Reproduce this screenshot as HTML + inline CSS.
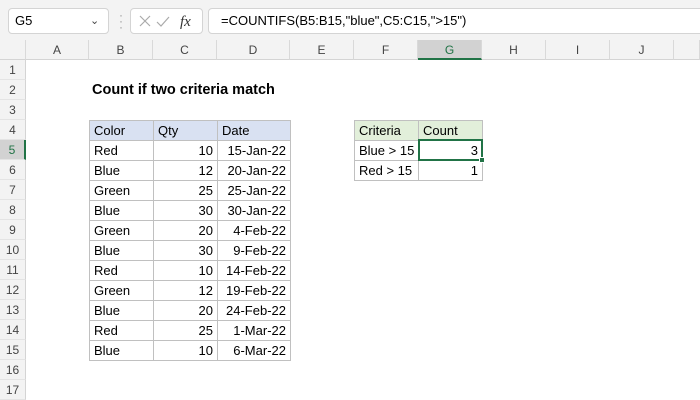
<!DOCTYPE html>
<html><head><meta charset="utf-8"><style>
body{margin:0;width:700px;height:400px;overflow:hidden;background:#fff;font-family:"Liberation Sans",Arial,sans-serif;position:relative}
div{position:absolute;box-sizing:border-box}
.top{left:0;top:0;width:700px;height:40px;background:#f3f3f3}
.box{background:#fff;border:1px solid #d4d4d4;border-radius:4px}
.ch{top:40px;height:20px;background:#f3f3f3;border-right:1px solid #d9d9d9;border-bottom:1px solid #d4d4d4;font-size:12px;color:#444;text-align:center;line-height:20px}
.rh{left:0;width:26px;height:20px;background:#f3f3f3;border-bottom:1px solid #e4e4e4;border-right:1px solid #d4d4d4;font-size:12px;color:#444;text-align:center;line-height:20px}
.c{height:21px;border:1px solid #c0c0c0;font-size:13px;line-height:19px;padding:0 4px;color:#000;white-space:nowrap}
.r{text-align:right}
</style></head><body>
<div class="top"></div>
<div class="box" style="left:8px;top:8px;width:101px;height:26px;font-size:13px;line-height:24px;padding-left:6px">G5</div>
<div style="left:90px;top:14px;font-size:11px;color:#444">&#8964;</div>
<div style="left:119px;top:12px;font-size:12px;color:#999;line-height:6px">·<br>·<br>·</div>
<div class="box" style="left:130px;top:8px;width:73px;height:26px"></div>
<svg style="position:absolute;left:137px;top:13px" width="60" height="16"><path d="M3 3l10 10M13 3L3 13" stroke="#aaa" stroke-width="1.2" fill="none"/><path d="M20 9l4 4 8-9" stroke="#aaa" stroke-width="1.2" fill="none"/><text x="43" y="13" font-family="Liberation Serif" font-style="italic" font-size="15" fill="#333">fx</text></svg>
<div class="box" style="left:208px;top:8px;width:500px;height:26px;font-size:13px;line-height:24px;padding-left:12px">=COUNTIFS(B5:B15,"blue",C5:C15,"&gt;15")</div>
<div id="g"></div>
<script>
var h='';
var cols=[['',0,26],['A',26,89],['B',89,153],['C',153,217],['D',217,290],['E',290,354],['F',354,418],['G',418,482],['H',482,546],['I',546,610],['J',610,674],['',674,700]];
cols.forEach(function(c){var s=c[0]=='G'?'background:#d2d2d2;border-bottom:2px solid #217346;color:#217346;':'';h+='<div class="ch" style="left:'+c[1]+'px;width:'+(c[2]-c[1])+'px;'+s+'">'+c[0]+'</div>';});
for(var i=1;i<=17;i++){var s=i==5?'background:#d2d2d2;border-right:2px solid #217346;color:#217346;':'';h+='<div class="rh" style="top:'+(60+(i-1)*20)+'px;'+s+'">'+i+'</div>';}
h+='<div style="left:92px;top:81px;font-size:14.5px;font-weight:bold;line-height:18px">Count if two criteria match</div>';
var d=[['Red',10,'15-Jan-22'],['Blue',12,'20-Jan-22'],['Green',25,'25-Jan-22'],['Blue',30,'30-Jan-22'],['Green',20,'4-Feb-22'],['Blue',30,'9-Feb-22'],['Red',10,'14-Feb-22'],['Green',12,'19-Feb-22'],['Blue',20,'24-Feb-22'],['Red',25,'1-Mar-22'],['Blue',10,'6-Mar-22']];
function cell(x,y,w,t,cl,st){h+='<div class="c '+(cl||'')+'" style="left:'+x+'px;top:'+y+'px;width:'+(w+1)+'px;'+(st||'')+'">'+t+'</div>';}
var bl='background:#d9e1f2;',gr='background:#e2efda;';
cell(89,120,64,'Color','',bl);cell(153,120,64,'Qty','',bl);cell(217,120,73,'Date','',bl);
d.forEach(function(r,k){var y=140+k*20;cell(89,y,64,r[0]);cell(153,y,64,r[1],'r');cell(217,y,73,r[2],'r');});
cell(354,120,64,'Criteria','',gr);cell(418,120,64,'Count','',gr);
cell(354,140,64,'Blue &gt; 15');cell(418,140,64,'3','r');
cell(354,160,64,'Red &gt; 15');cell(418,160,64,'1','r');
h+='<div style="left:418px;top:139px;width:65px;height:22px;border:2px solid #217346"></div>';
h+='<div style="left:479px;top:157px;width:6px;height:6px;background:#217346;border:1px solid #fff"></div>';
document.getElementById('g').outerHTML=h;
</script>
</body></html>
